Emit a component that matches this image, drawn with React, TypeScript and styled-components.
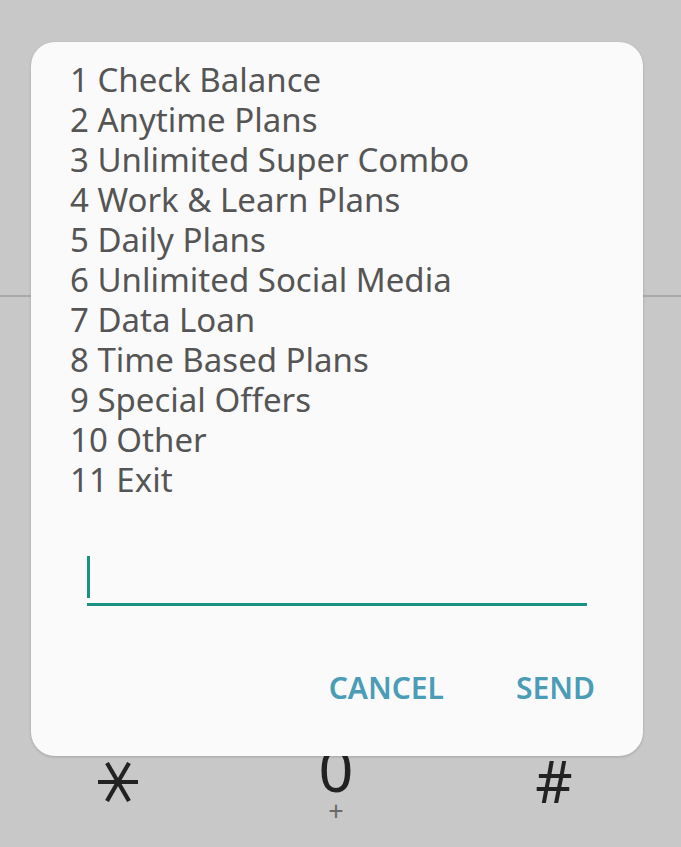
import styled, { createGlobalStyle } from "styled-components";

const menuItems = [
  "1 Check Balance",
  "2 Anytime Plans",
  "3 Unlimited Super Combo",
  "4 Work & Learn Plans",
  "5 Daily Plans",
  "6 Unlimited Social Media",
  "7 Data Loan",
  "8 Time Based Plans",
  "9 Special Offers",
  "10 Other",
  "11 Exit",
];

const GlobalStyle = createGlobalStyle`
  html, body {
    margin: 0;
    padding: 0;
    background: #c8c8c8;
    font-family: "Noto Sans", "Open Sans", sans-serif;
  }
`;

const StarIcon = () => (
  <svg width="40" height="40" viewBox="0 0 40 40">
    <g stroke="#222" strokeWidth="4.2" strokeLinecap="butt">
      <line x1="0" y1="20" x2="40" y2="20" />
      <line x1="9" y1="1" x2="31" y2="39" />
      <line x1="31" y1="1" x2="9" y2="39" />
    </g>
  </svg>
);

export default function App() {
  return (
    <Screen>
      <GlobalStyle />
      <TopArea />
      <Keypad>
        <KeyRow>
          <Key $offset={22}>
            <StarIcon />
          </Key>
          <Key $offset={0}>
            <Digit $size={61}>0</Digit>
            <SubLabel>+</SubLabel>
          </Key>
          <Key $offset={12}>
            <Digit $size={58}>#</Digit>
          </Key>
        </KeyRow>
      </Keypad>

      <Dialog>
        <Menu>
          {menuItems.map((item) => (
            <MenuLine key={item}>{item}</MenuLine>
          ))}
        </Menu>
        <Field>
          <Caret />
        </Field>
        <Actions>
          <ActionButton type="button">CANCEL</ActionButton>
          <ActionButton type="button">SEND</ActionButton>
        </Actions>
      </Dialog>
    </Screen>
  );
}

const Screen = styled.div`
  position: relative;
  width: 100%;
  height: 847px;
  overflow: hidden;
  display: flex;
  flex-direction: column;
  background: #c8c8c8;
`;

const TopArea = styled.div`
  height: 295px;
  border-bottom: 2px solid #a9a9a9;
`;

const Keypad = styled.div`
  flex: 1;
  padding: 443px 0 0 9px;
`;

const KeyRow = styled.div`
  display: grid;
  grid-template-columns: repeat(3, 218px);
`;

const Key = styled.div<{ $offset: number }>`
  display: flex;
  flex-direction: column;
  align-items: center;
  padding-top: ${(p) => p.$offset}px;
  color: #222;
`;

const Digit = styled.div<{ $size: number }>`
  font-size: ${(p) => p.$size}px;
  line-height: 58px;
`;

const SubLabel = styled.div`
  font-size: 27px;
  line-height: 22px;
  margin-top: 2px;
  color: #6a6a6a;
`;

const Dialog = styled.div`
  position: absolute;
  top: 42px;
  left: 31px;
  width: 612px;
  height: 714px;
  box-sizing: border-box;
  padding: 18px 39px 0;
  background: #fafafa;
  border-radius: 24px;
  box-shadow: 0 1px 3px rgba(0, 0, 0, 0.18);
`;

const Menu = styled.div`
  display: flex;
  flex-direction: column;
`;

const MenuLine = styled.div`
  font-size: 33px;
  line-height: 40px;
  color: #555;
  white-space: nowrap;
`;

const Field = styled.div`
  margin: 50px 17px 0;
  height: 56px;
  padding-top: 6px;
  box-sizing: border-box;
  border-bottom: 3px solid #1a9283;
`;

const Caret = styled.div`
  width: 3px;
  height: 42px;
  background: #1a9283;
`;

const Actions = styled.div`
  display: flex;
  justify-content: flex-end;
  gap: 72px;
  margin: 67px 9px 0 0;
`;

const ActionButton = styled.button`
  border: none;
  background: none;
  padding: 0;
  font-family: "Noto Sans", "Open Sans", sans-serif;
  font-size: 30px;
  line-height: 30px;
  font-weight: 600;
  color: #4a9cb7;
  cursor: pointer;
`;
